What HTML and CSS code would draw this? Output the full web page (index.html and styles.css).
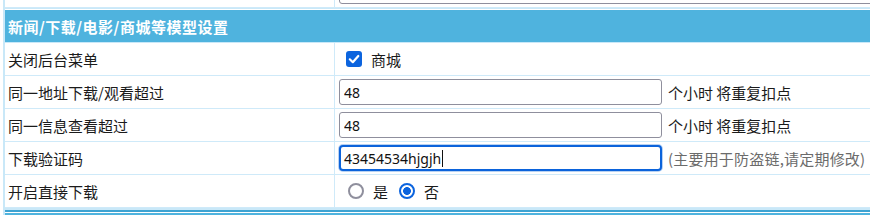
FILE: index.html
```html
<!DOCTYPE html>
<html lang="zh-CN">
<head>
<meta charset="utf-8">
<title>模型设置</title>
<link rel="stylesheet" href="styles.css">
</head>
<body>
<div class="page">
  <div class="row row-frag">
    <div class="label"></div>
    <div class="value"><input class="txt wide" type="text" value=""></div>
  </div>
  <div class="section-head">新闻/下载/电影/商城等模型设置</div>
  <div class="row">
    <div class="label">关闭后台菜单</div>
    <div class="value">
      <label class="opt">
        <span class="box"><svg width="16" height="16" viewBox="0 0 16 16"><rect x="0" y="0" width="16" height="16" rx="3" fill="#0c64de"/><path d="M3.8 8.3 L6.8 11.2 L12.3 5" fill="none" stroke="#fff" stroke-width="2.2" stroke-linecap="round" stroke-linejoin="round"/></svg></span>商城
      </label>
    </div>
  </div>
  <div class="row">
    <div class="label">同一地址下载/观看超过</div>
    <div class="value"><input class="txt" type="text" value="48"><span class="after">个小时 将重复扣点</span></div>
  </div>
  <div class="row">
    <div class="label">同一信息查看超过</div>
    <div class="value"><input class="txt" type="text" value="48"><span class="after">个小时 将重复扣点</span></div>
  </div>
  <div class="row">
    <div class="label">下载验证码</div>
    <div class="value"><span class="txt focused"><span class="val">43454534hjgjh</span><span class="caret"></span></span><span class="after hint">(主要用于防盗链,请定期修改)</span></div>
  </div>
  <div class="row">
    <div class="label">开启直接下载</div>
    <div class="value">
      <label class="opt ro"><span class="radio"></span>是</label>
      <label class="opt ro"><span class="radio on"></span>否</label>
    </div>
  </div>
  <div class="section-head next"></div>
</div>
</body>
</html>
```

FILE: styles.css
```css
html, body {
  margin: 0;
  padding: 0;
  background: #fff;
  overflow: hidden;
}
.page {
  margin-top: -25px;
  margin-left: 3px;
  width: 900px;
  border-left: 2px solid #c9e8f8;
  font-family: "Noto Sans CJK SC", "Noto Sans", sans-serif;
  font-size: 15px;
  color: #1b1b1b;
}
.row {
  display: grid;
  grid-template-columns: 330px 1fr;
  height: 32px;
  border-bottom: 1px solid #cfeaf9;
}
.label {
  display: flex;
  align-items: center;
  padding-left: 3px;
  border-right: 1px solid #cfeaf9;
  white-space: nowrap;
}
.value {
  display: flex;
  align-items: center;
  padding-left: 4px;
  white-space: nowrap;
}
.txt {
  box-sizing: border-box;
  width: 323px;
  height: 26px;
  border: 1px solid #8f8f9d;
  border-radius: 3px;
  padding: 0 0 0 4px;
  margin: 0;
  font-family: "Noto Sans", "Noto Sans CJK SC", sans-serif;
  font-size: 14px;
  color: #111;
  background: #fff;
  outline: none;
}
.txt.wide {
  width: 700px;
}
.txt.focused {
  display: flex;
  align-items: center;
  border: 2px solid #0b63db;
  border-radius: 4px;
  padding-left: 3px;
  box-shadow: 0 0 0 1px #b7d2f3;
}
.caret {
  display: inline-block;
  width: 1px;
  height: 17px;
  background: #111;
  margin-left: 1px;
}
.after {
  margin-left: 6px;
  font-size: 15px;
}
.hint {
  color: #6b6b6b;
  letter-spacing: 0.2px;
}
.section-head {
  box-sizing: border-box;
  height: 35px;
  border-top: 1px solid #c9e8f8;
  border-bottom: 1px solid #c9e8f8;
  background: #4fb3de;
  box-shadow: inset 0 1px 0 #fff;
  padding: 1px 0 0 3px;
  display: flex;
  align-items: center;
  color: #fff;
  font-weight: bold;
  font-size: 15px;
  letter-spacing: 0.5px;
}
.section-head.next {
  border-top: 2px solid #c9e8f8;
  box-shadow: inset 0 2px 0 #3ea3d2, inset 0 3px 0 #fff;
}
.opt {
  display: inline-flex;
  align-items: center;
  margin-left: 7px;
  margin-right: 1px;
}
.opt.ro {
  margin-left: 9px;
  margin-right: 2px;
}
.box {
  display: inline-flex;
  width: 16px;
  height: 16px;
  margin-right: 9px;
}
.radio {
  box-sizing: border-box;
  display: inline-block;
  width: 16px;
  height: 16px;
  border: 2px solid #8f8f9d;
  border-radius: 50%;
  margin-right: 9px;
  background: #fff;
}
.radio.on {
  border-color: #0c64de;
  background: radial-gradient(circle, #0c64de 0 3.6px, #fff 4.2px);
}
```
